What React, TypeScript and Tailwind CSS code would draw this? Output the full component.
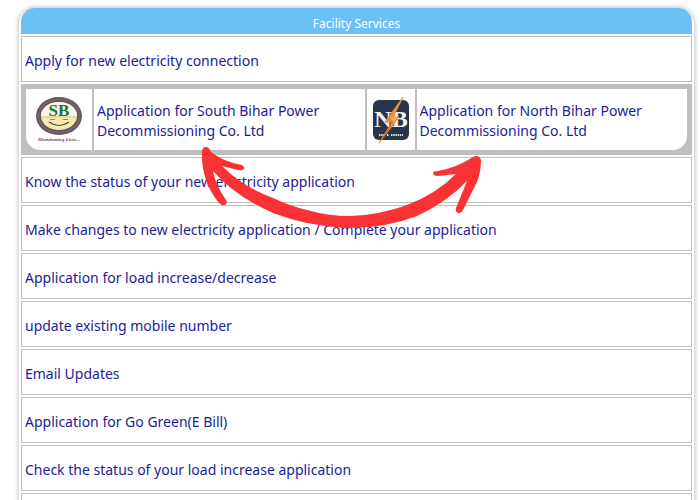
import React from "react";

const FONT = "font-['Noto_Sans','Open_Sans',sans-serif]";

const SERVICES = [
  "Know the status of your new electricity application",
  "Make changes to new electricity application / Complete your application",
  "Application for load increase/decrease",
  "update existing mobile number",
  "Email Updates",
  "Application for Go Green(E Bill)",
  "Check the status of your load increase application",
];

function ServiceRow({ label }: { label?: string }) {
  return (
    <li className="flex h-[46px] items-center border border-[#bdbdbd] px-[3px] pt-[4px]">
      {label && (
        <a href="#" className="text-[#1c1c98]">
          {label}
        </a>
      )}
    </li>
  );
}

function SouthBiharLogo() {
  return (
    <svg width="48" height="46" viewBox="0 0 48 46" className="shrink-0" role="img" aria-label="South Bihar Power">
      <ellipse cx="24" cy="19" rx="23" ry="19" fill="#65555e" />
      <ellipse cx="24" cy="19" rx="20.5" ry="16.5" fill="none" stroke="#8b7b7b" strokeWidth="1.5" strokeDasharray="1 1.2" />
      <ellipse cx="24" cy="19" rx="18" ry="14" fill="#f6eaae" />
      <path d="M6 19a18 14 0 0 1 36 0Z" fill="#f9f6e4" />
      <path d="M6 20h36" stroke="#d8cf8e" strokeWidth="1" />
      <text x="24" y="19" textAnchor="middle" fontFamily="Liberation Serif, serif" fontWeight="700" fontSize="17" fill="#20703f">
        SB
      </text>
      <path d="M14 25Q24 32 34 25" fill="none" stroke="#4e4650" strokeWidth="1.2" />
      <path d="M15 22.500h5M28 22.500h5" stroke="#8a8375" strokeWidth="1" />
      <text x="24" y="44" textAnchor="middle" fontFamily="Liberation Serif, serif" fontStyle="italic" fontWeight="700" fontSize="5" fill="#55505c">
        Illuminating Lives...
      </text>
    </svg>
  );
}

function NorthBiharLogo() {
  return (
    <svg width="36" height="46" viewBox="0 0 36 46" className="shrink-0" role="img" aria-label="North Bihar Power">
      <rect x="0" y="3" width="36" height="40" rx="6" fill="#27344a" />
      <text x="18" y="30" textAnchor="middle" fontFamily="Liberation Serif, serif" fontWeight="700" fontSize="24" fill="#f4f4f4">
        NB
      </text>
      <path d="M30 0L12 25h7L6 46L26 20h-6Z" fill="#f08a35" stroke="#f08a35" strokeWidth="1" />
      <path d="M30 0L19 20h6L21 25l-3-4Z" fill="#f6b04c" />
      <path d="M19 25L6 46L15 33Z" fill="#c8452f" />
      <path d="M6 38h5M14 38h2M18 38h12" stroke="#d5d9df" strokeWidth="2" strokeDasharray="1.5 0.7" />
    </svg>
  );
}

function CompanyLink({ children }: { children: React.ReactNode }) {
  return (
    <a href="#" className="flex items-center px-[3px] pt-[2px] text-[#1c1c98]">
      <span>{children}</span>
    </a>
  );
}

function CurvedArrow() {
  return (
    <svg
      className="pointer-events-none absolute top-[140px] left-[195px]"
      width="295"
      height="100"
      viewBox="195 140 295 100"
      aria-hidden="true"
    >
      <path
        fill="#fb3233"
        d="M202 152Q202 147 206 147Q209 147 211 152Q224 162 242 165Q245 167 244 169Q242 171 238 170L222 166Q230 174 240 181Q256 192 273 198Q290 206 307 210Q328 216 350 216Q380 215 407 205Q436 194 456 174L438 176Q433 176 433 173Q433 171 438 171Q456 168 473 157Q479 154 481 160Q481 172 477 182L463 210Q461 214 458 213Q455 212 456 208L467 181Q447 202 417 216Q383 229 345 228Q307 226 273 213Q236 197 213 171Q215 184 226 200Q228 203 225 205Q222 206 219 203Q201 181 202 152Z"
      />
    </svg>
  );
}

export default function App() {
  return (
    <div className={`relative h-screen overflow-hidden bg-white pt-[8px] pr-[6px] pl-[19px] text-[14px] leading-[20px] ${FONT}`}>
      <main className="rounded-t-[16px] px-[2px] shadow-[0_0_4px_1px_#c4c4c4]">
        <h1 className="flex h-[26px] items-center justify-center rounded-t-[14px] bg-[#6bc1f5] pt-[6px] text-[12px] text-white">
          Facility Services
        </h1>
        <ul className="flex flex-col gap-[2px] pt-[2px]">
          <ServiceRow label="Apply for new electricity connection" />
          <li className="bg-[#bfbfbf] p-[5px]">
            <div className="grid h-[61px] grid-cols-[66px_1fr_48px_1fr] gap-[2px] overflow-hidden rounded-b-[14px] *:bg-white">
              <div className="flex items-center justify-center">
                <SouthBiharLogo />
              </div>
              <CompanyLink>
                Application for South Bihar Power
                <br />
                Decommissioning Co. Ltd
              </CompanyLink>
              <div className="flex items-center justify-center">
                <NorthBiharLogo />
              </div>
              <CompanyLink>
                Application for North Bihar Power
                <br />
                Decommissioning Co. Ltd
              </CompanyLink>
            </div>
          </li>
          {SERVICES.map((label) => (
            <ServiceRow key={label} label={label} />
          ))}
          <ServiceRow />
        </ul>
      </main>
      <CurvedArrow />
    </div>
  );
}
